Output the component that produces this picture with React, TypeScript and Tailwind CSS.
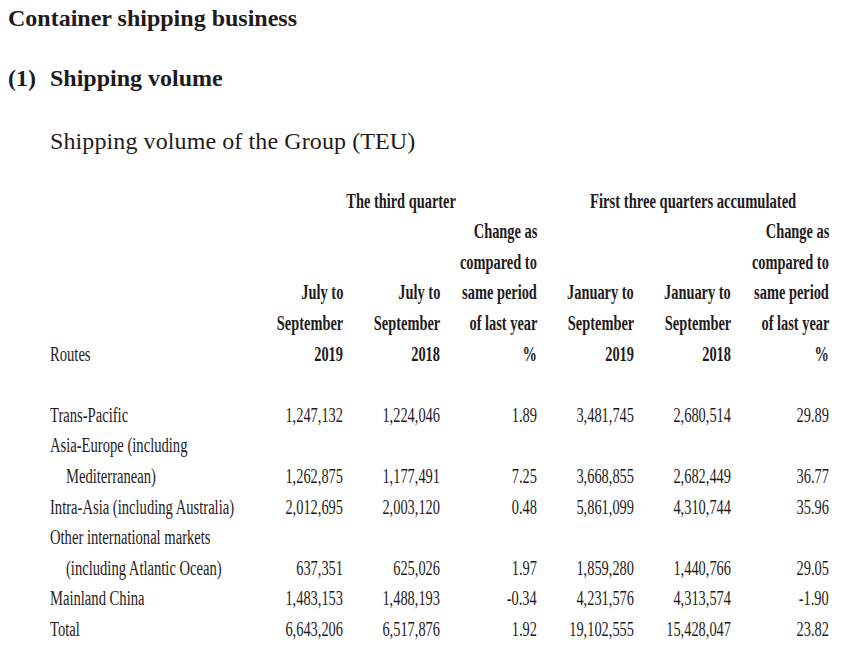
import React from "react";

type Cell = { t: string; b?: boolean; indent?: boolean };

const hdr: (string | null)[][] = [
  ["", "", "", "Change as", "", "", "Change as"],
  ["", "", "", "compared to", "", "", "compared to"],
  ["", "July to", "July to", "same period", "January to", "January to", "same period"],
  ["", "September", "September", "of last year", "September", "September", "of last year"],
  ["Routes", "2019", "2018", "%", "2019", "2018", "%"],
];

const data: Cell[][] = [
  [{ t: "Trans-Pacific" }, { t: "1,247,132" }, { t: "1,224,046" }, { t: "1.89" }, { t: "3,481,745" }, { t: "2,680,514" }, { t: "29.89" }],
  [{ t: "Asia-Europe (including" }, { t: "" }, { t: "" }, { t: "" }, { t: "" }, { t: "" }, { t: "" }],
  [{ t: "Mediterranean)", indent: true }, { t: "1,262,875" }, { t: "1,177,491" }, { t: "7.25" }, { t: "3,668,855" }, { t: "2,682,449" }, { t: "36.77" }],
  [{ t: "Intra-Asia (including Australia)" }, { t: "2,012,695" }, { t: "2,003,120" }, { t: "0.48" }, { t: "5,861,099" }, { t: "4,310,744" }, { t: "35.96" }],
  [{ t: "Other international markets" }, { t: "" }, { t: "" }, { t: "" }, { t: "" }, { t: "" }, { t: "" }],
  [{ t: "(including Atlantic Ocean)", indent: true }, { t: "637,351" }, { t: "625,026" }, { t: "1.97" }, { t: "1,859,280" }, { t: "1,440,766" }, { t: "29.05" }],
  [{ t: "Mainland China" }, { t: "1,483,153" }, { t: "1,488,193" }, { t: "-0.34" }, { t: "4,231,576" }, { t: "4,313,574" }, { t: "-1.90" }],
  [{ t: "Total" }, { t: "6,643,206" }, { t: "6,517,876" }, { t: "1.92" }, { t: "19,102,555" }, { t: "15,428,047" }, { t: "23.82" }],
];

function LeftCell({ t, b, indent }: Cell) {
  return (
    <div className={`h-[30.6px] leading-[30.6px] flex justify-start ${indent ? "pl-[16px]" : ""}`}>
      <span className={`shrink-0 origin-left scale-x-[0.73] whitespace-nowrap ${b ? "font-bold" : ""}`}>{t}</span>
    </div>
  );
}

function RightCell({ t, b }: Cell) {
  return (
    <div className="h-[30.6px] leading-[30.6px] flex justify-end">
      <span className={`shrink-0 origin-right scale-x-[0.72] whitespace-nowrap ${b ? "font-bold" : ""}`}>{t}</span>
    </div>
  );
}

export default function App() {
  return (
    <div
      className="w-[851px] h-[648px] bg-white text-[#1f1b1c] overflow-hidden"
      style={{ fontFamily: '"Liberation Serif", "Times New Roman", serif' }}
    >
      <div className="pl-[8px] text-[24px] leading-[36px] font-bold">Container shipping business</div>
      <div className="mt-[24px] flex text-[24px] leading-[36px] font-bold pl-[8px]">
        <span className="w-[42px]">(1)</span>
        <span>Shipping volume</span>
      </div>
      <div className="mt-[27px] pl-[50px] text-[24px] leading-[36px] tracking-[0.1px]">Shipping volume of the Group (TEU)</div>

      <div className="mt-[26.7px] pl-[50px] text-[20px] grid grid-cols-[196px_97px_97px_97px_97px_97px_98px]">
        <div className="h-[30.6px]" />
        <div className="col-span-3 h-[30.6px] leading-[30.6px] flex justify-center pl-[20px]">
          <span className="shrink-0 origin-center scale-x-[0.72] whitespace-nowrap font-bold">The third quarter</span>
        </div>
        <div className="col-span-3 h-[30.6px] leading-[30.6px] flex justify-center pl-[20px]">
          <span className="shrink-0 origin-center scale-x-[0.73] whitespace-nowrap font-bold">First three quarters accumulated</span>
        </div>

        {hdr.map((row, ri) =>
          row.map((c, ci) =>
            ci === 0 ? (
              <LeftCell key={`h${ri}-${ci}`} t={c ?? ""} />
            ) : (
              <RightCell key={`h${ri}-${ci}`} t={c ?? ""} b />
            )
          )
        )}

        <div className="col-span-7 h-[30.6px]" />

        {data.map((row, ri) =>
          row.map((c, ci) =>
            ci === 0 ? (
              <LeftCell key={`d${ri}-${ci}`} {...c} />
            ) : (
              <RightCell key={`d${ri}-${ci}`} {...c} />
            )
          )
        )}
      </div>
    </div>
  );
}
